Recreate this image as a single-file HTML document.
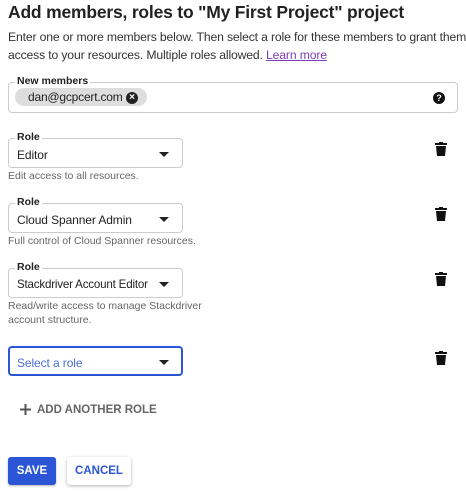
<!DOCTYPE html>
<html><head><style>
body{margin:0;width:466px;height:492px;background:#fff;font-family:"Liberation Sans",sans-serif;color:#202124;position:relative;overflow:hidden}
.a{position:absolute}
.box{position:absolute;border:1px solid #ccc;border-radius:4px;box-sizing:border-box}
.lbl{position:absolute;top:-8px;left:6px;background:#fff;padding:0 2px;font-size:10.5px;font-weight:bold;color:#222}
.val{position:absolute;left:8px;top:9px;font-size:12px;color:#222;letter-spacing:-0.1px}
.arr{position:absolute;right:13px;top:13px;width:0;height:0;border-left:5px solid transparent;border-right:5px solid transparent;border-top:5px solid #222}
.help{position:absolute;left:8px;font-size:10.5px;color:#666;line-height:14px}
.trash{position:absolute;left:435px}
</style></head><body>
<div class="a" style="left:8px;top:2px;font-size:17.5px;font-weight:bold;color:#222;letter-spacing:-0.2px">Add members, roles to "My First Project" project</div>
<div class="a" style="left:8px;top:28px;font-size:12.2px;line-height:18px;color:#333;white-space:nowrap;letter-spacing:-0.15px">Enter one or more members below. Then select a role for these members to grant them<br>access to your resources. Multiple roles allowed. <span style="color:#7b3fb8;text-decoration:underline">Learn more</span></div>
<div class="box" style="left:8px;top:82px;width:450px;height:31px">
<div class="lbl">New members</div>
<div class="a" style="left:6px;top:5px;height:18px;width:132px;background:#ddd;border-radius:9px"></div>
<div class="a" style="left:19px;top:7px;font-size:12px;color:#222;letter-spacing:-0.2px">dan@gcpcert.com</div>
<div class="a" style="left:117px;top:9px;width:12px;height:12px;border-radius:50%;background:#222;color:#fff;font-size:10px;line-height:12px;text-align:center;font-weight:bold">×</div>
<div class="a" style="left:424px;top:9px;width:12px;height:12px;border-radius:50%;background:#111;color:#fff;font-size:9px;line-height:12px;text-align:center;font-weight:bold">?</div>
</div>
<div class="box" style="left:8px;top:138px;width:175px;height:30px"><div class="lbl">Role</div><div class="val">Editor</div><div class="arr"></div></div>
<div class="help" style="top:169px">Edit access to all resources.</div>
<div class="box" style="left:8px;top:203px;width:175px;height:30px"><div class="lbl">Role</div><div class="val">Cloud Spanner Admin</div><div class="arr"></div></div>
<div class="help" style="top:234px">Full control of Cloud Spanner resources.</div>
<div class="box" style="left:8px;top:268px;width:175px;height:30px"><div class="lbl">Role</div><div class="val" style="font-size:11.6px;letter-spacing:-0.2px">Stackdriver Account Editor</div><div class="arr"></div></div>
<div class="help" style="top:299px">Read/write access to manage Stackdriver<br>account structure.</div>
<div class="box" style="left:8px;top:346px;width:175px;height:30px;border:2px solid #2a56d6"><div class="val" style="left:7px;top:8px;color:#4a6fd8">Select a role</div><div class="arr" style="right:12px;top:12px"></div></div>
<svg class="trash" style="top:142px" width="12" height="14" viewBox="0 0 12 14"><rect x="0" y="1" width="12" height="2" fill="#111"/><rect x="4" y="0" width="4" height="2" fill="#111"/><path d="M1 4h10l-1 10H2z" fill="#111"/></svg>
<svg class="trash" style="top:207px" width="12" height="14" viewBox="0 0 12 14"><rect x="0" y="1" width="12" height="2" fill="#111"/><rect x="4" y="0" width="4" height="2" fill="#111"/><path d="M1 4h10l-1 10H2z" fill="#111"/></svg>
<svg class="trash" style="top:272px" width="12" height="14" viewBox="0 0 12 14"><rect x="0" y="1" width="12" height="2" fill="#111"/><rect x="4" y="0" width="4" height="2" fill="#111"/><path d="M1 4h10l-1 10H2z" fill="#111"/></svg>
<svg class="trash" style="top:351px" width="12" height="14" viewBox="0 0 12 14"><rect x="0" y="1" width="12" height="2" fill="#111"/><rect x="4" y="0" width="4" height="2" fill="#111"/><path d="M1 4h10l-1 10H2z" fill="#111"/></svg>
<svg class="a" style="left:20px;top:404px" width="11" height="11" viewBox="0 0 11 11"><rect x="4.5" y="0" width="2" height="11" fill="#555"/><rect x="0" y="4.5" width="11" height="2" fill="#555"/></svg>
<div class="a" style="left:37px;top:404px;font-size:11.5px;font-weight:bold;color:#666">ADD ANOTHER ROLE</div>
<div class="a" style="left:8px;top:457px;width:48px;height:28px;background:#2a56d6;border-radius:3px;color:#fff;font-size:11.5px;font-weight:bold;text-align:center;line-height:28px;box-shadow:0 1px 2px rgba(0,0,0,.3)">SAVE</div>
<div class="a" style="left:67px;top:457px;width:64px;height:28px;background:#fff;border-radius:3px;color:#2a56d6;font-size:11.5px;font-weight:bold;text-align:center;line-height:28px;box-shadow:0 1px 3px rgba(0,0,0,.3)">CANCEL</div>
</body></html>
